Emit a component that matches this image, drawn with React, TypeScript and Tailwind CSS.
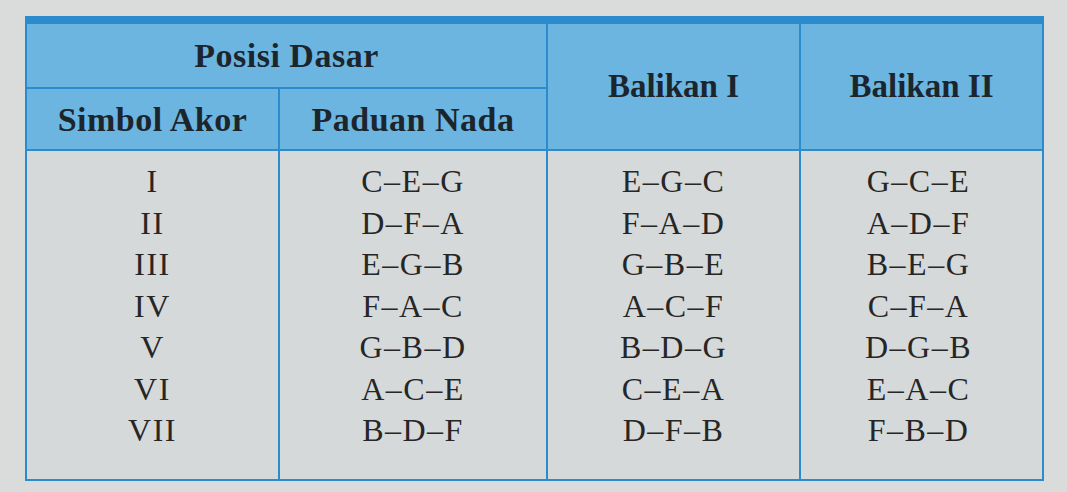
const rows = [
  ['I', 'C–E–G', 'E–G–C', 'G–C–E'],
  ['II', 'D–F–A', 'F–A–D', 'A–D–F'],
  ['III', 'E–G–B', 'G–B–E', 'B–E–G'],
  ['IV', 'F–A–C', 'A–C–F', 'C–F–A'],
  ['V', 'G–B–D', 'B–D–G', 'D–G–B'],
  ['VI', 'A–C–E', 'C–E–A', 'E–A–C'],
  ['VII', 'B–D–F', 'D–F–B', 'F–B–D'],
];

function Column({ items, col }: { items: string[]; col: number }) {
  return (
    <td
      className={`border-x-2 border-[#2b8bcc] align-top pt-[10px] ${col === 3 ? 'pr-[6px]' : ''}`}
    >
      <div className="flex flex-col items-center">
        {items.map((t) => (
          <div key={t} className="h-[41.5px] leading-[41.5px] text-[32px] tracking-[1.5px] text-[#262626]">
            {t}
          </div>
        ))}
      </div>
    </td>
  );
}

export default function App() {
  return (
    <div className="w-[1067px] h-[492px] bg-[#dadbdb] pt-[16px] pl-[25px] font-['Liberation_Serif',serif] overflow-hidden">
      <table className="w-[1017px] border-collapse border-t-[8px] border-b-2 border-x-2 border-[#2b8bcc] table-fixed">
        <colgroup>
          <col className="w-[253px]" />
          <col className="w-[268px]" />
          <col className="w-[253px]" />
          <col className="w-[243px]" />
        </colgroup>
        <thead className="bg-[#6cb5e1] text-[#1c252c] font-bold">
          <tr className="h-[68px]">
            <th colSpan={2} className="border-2 border-[#2b8bcc] border-t-0 text-[34px] tracking-[0.5px] font-bold">
              Posisi Dasar
            </th>
            <th rowSpan={2} className="border-2 border-[#2b8bcc] border-t-0 text-[33px] font-bold">
              Balikan I
            </th>
            <th rowSpan={2} className="border-2 border-[#2b8bcc] border-t-0 text-[33px] font-bold">
              Balikan II
            </th>
          </tr>
          <tr className="h-[62px]">
            <th className="border-2 border-[#2b8bcc] text-[34px] tracking-[0.5px] font-bold">Simbol Akor</th>
            <th className="border-2 border-[#2b8bcc] text-[34px] tracking-[0.5px] font-bold">Paduan Nada</th>
          </tr>
        </thead>
        <tbody className="bg-[#d6d9da]">
          <tr className="h-[330px]">
            {[0, 1, 2, 3].map((c) => (
              <Column key={c} col={c} items={rows.map((r) => r[c])} />
            ))}
          </tr>
        </tbody>
      </table>
    </div>
  );
}
